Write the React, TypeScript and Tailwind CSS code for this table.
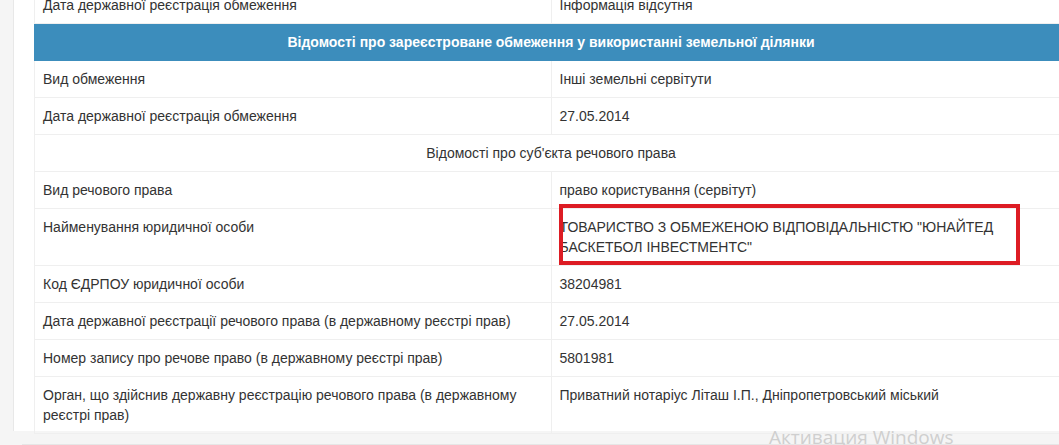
const rows1 = [
  ['Вид обмеження', 'Інші земельні сервітути'],
  ['Дата державної реєстрація обмеження', '27.05.2014'],
];

const rows2 = [
  ['Код ЄДРПОУ юридичної особи', '38204981'],
  ['Дата державної реєстрації речового права (в державному реєстрі прав)', '27.05.2014'],
  ['Номер запису про речове право (в державному реєстрі прав)', '5801981'],
];

const td = 'border border-[#efefef] px-2 py-2 leading-[20px] align-top w-1/2';

const Row = ({ label, value }: { label: string; value: React.ReactNode }) => (
  <tr>
    <td className={td}>{label}</td>
    <td className={td}>{value}</td>
  </tr>
);

export default function App() {
  return (
    <div className="relative h-[445px] w-full overflow-hidden bg-[#f5f5f5] font-['Liberation_Sans',Arial,sans-serif] text-[14px] text-[#333]">
      <div className="ml-[13px] h-full border-l border-[#e8e8e8] bg-white">
        <table className="-mt-[14px] ml-[20px] w-[1034px] border-collapse">
          <tbody>
            <Row label="Дата державної реєстрація обмеження" value="Інформація відсутня" />
            <tr>
              <td colSpan={2} className="border border-[#3c8dbc] bg-[#3c8dbc] px-2 py-2 text-center font-bold leading-[20px] text-white">
                Відомості про зареєстроване обмеження у використанні земельної ділянки
              </td>
            </tr>
            {rows1.map(([l, v]) => (
              <Row key={l} label={l} value={v} />
            ))}
            <tr>
              <td colSpan={2} className="border border-[#efefef] px-2 py-2 text-center leading-[20px]">
                Відомості про суб'єкта речового права
              </td>
            </tr>
            <Row label="Вид речового права" value="право користування (сервітут)" />
            <tr>
              <td className={td}>Найменування юридичної особи</td>
              <td className={td}>
                <div className="relative">
                  ТОВАРИСТВО З ОБМЕЖЕНОЮ ВІДПОВІДАЛЬНІСТЮ "ЮНАЙТЕД
                  <br />
                  БАСКЕТБОЛ ІНВЕСТМЕНТС"
                  {/* annotation box */}
                  <div className="absolute -left-[1px] -top-[13px] h-[61px] w-[461px] border-[4px] border-[#dd1c24]" />
                </div>
              </td>
            </tr>
            {rows2.map(([l, v]) => (
              <Row key={l} label={l} value={v} />
            ))}
            <Row
              label="Орган, що здійснив державну реєстрацію речового права (в державному реєстрі прав)"
              value="Приватний нотаріус Літаш І.П., Дніпропетровський міський"
            />
          </tbody>
        </table>
        <div className="ml-[8px] mt-[10px] border-t border-[#e6e6e6]" />
      </div>

      <div className="absolute left-[769px] top-[423px] font-['Open_Sans',sans-serif] text-[19px] leading-[28px] text-[#cfcfcf]">
        Активация Windows
      </div>
    </div>
  );
}
